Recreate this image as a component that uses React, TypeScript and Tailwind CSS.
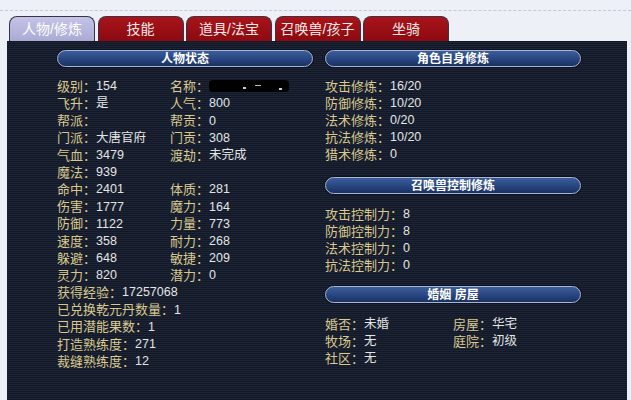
import type { ReactNode } from 'react'

const font = { fontFamily: '"Liberation Sans", "Noto Sans CJK SC", sans-serif' }

const tabs = ['人物/修炼', '技能', '道具/法宝', '召唤兽/孩子', '坐骑']

type Pair = [string, ReactNode]

const leftGrid: [Pair, Pair | null][] = [
  [['级别', '154'], ['名称', <NameBlur key="n" />]],
  [['飞升', '是'], ['人气', '800']],
  [['帮派', ''], ['帮贡', '0']],
  [['门派', '大唐官府'], ['门贡', '308']],
  [['气血', '3479'], ['渡劫', '未完成']],
  [['魔法', '939'], null],
  [['命中', '2401'], ['体质', '281']],
  [['伤害', '1777'], ['魔力', '164']],
  [['防御', '1122'], ['力量', '773']],
  [['速度', '358'], ['耐力', '268']],
  [['躲避', '648'], ['敏捷', '209']],
  [['灵力', '820'], ['潜力', '0']],
]

const leftSingle: Pair[] = [
  ['获得经验', '17257068'],
  ['已兑换乾元丹数量', '1'],
  ['已用潜能果数', '1'],
  ['打造熟练度', '271'],
  ['裁缝熟练度', '12'],
]

const selfTrain: Pair[] = [
  ['攻击修炼', '16/20'],
  ['防御修炼', '10/20'],
  ['法术修炼', '0/20'],
  ['抗法修炼', '10/20'],
  ['猎术修炼', '0'],
]

const petTrain: Pair[] = [
  ['攻击控制力', '8'],
  ['防御控制力', '8'],
  ['法术控制力', '0'],
  ['抗法控制力', '0'],
]

const house: [Pair, Pair | null][] = [
  [['婚否', '未婚'], ['房屋', '华宅']],
  [['牧场', '无'], ['庭院', '初级']],
  [['社区', '无'], null],
]

function NameBlur() {
  return (
    <span className="relative inline-block h-[12px] w-[80px] translate-y-[2px] rounded-sm bg-black blur-[0.6px]">
      <span className="absolute left-[34px] top-[7px] h-[2px] w-[3px] bg-[#cfcfcf]" />
      <span className="absolute left-[46px] top-[5px] h-[1px] w-[6px] bg-[#bdbdbd]" />
      <span className="absolute left-[70px] top-[8px] h-[2px] w-[3px] bg-[#cfcfcf]" />
    </span>
  )
}

function Field({ label, value, tall }: { label: string; value: ReactNode; tall?: boolean }) {
  return (
    <div className={`flex items-center whitespace-nowrap ${tall ? 'h-[17.2px]' : 'h-[17px]'}`}>
      <span className="text-[13px] text-[#d9c98e]">{label}：</span>
      <span className="text-[12.5px] text-[#e4e4e4]">{value}</span>
    </div>
  )
}

function Pill({ children }: { children: ReactNode }) {
  return (
    <div className="flex h-[17px] w-[256px] items-center justify-center rounded-full border border-[#a9b6d2] bg-gradient-to-b from-[#3d5d9a] via-[#284783] to-[#1b3163] text-[12px] font-bold text-white shadow-[0_0_0_1px_#0c1220]">
      {children}
    </div>
  )
}

export default function App() {
  return (
    <div className="relative h-[400px] w-[631px] overflow-hidden bg-[#eef0f7]" style={font}>
      <div className="h-[11px] border-b border-dashed border-[#c4c8d4]" />

      <div className="flex gap-[2.5px] pl-[9px] pt-[5px]">
        {tabs.map((tab, i) => (
          <div
            className={`flex h-[25px] w-[86px] items-center justify-center rounded-t-[8px] border border-b-0 border-[#3b3344] text-[14px] ${
              i === 0
                ? 'bg-gradient-to-b from-[#c4c4e8] to-[#aaaad6] text-white'
                : 'bg-gradient-to-b from-[#a8141a] to-[#8c0a10] text-[#f4e8e8]'
            }`}
            key={tab}
          >
            {tab}
          </div>
        ))}
      </div>

      <div className="ml-[7px] h-[360px] w-[620px] bg-[repeating-linear-gradient(0deg,#1c2435_0px,#1c2435_1px,#121826_1px,#121826_2px)] pl-[50px] pt-[9px]">
        <div className="grid grid-cols-[256px_256px] gap-x-[12px]">
          <div>
            <Pill>人物状态</Pill>
            <div className="mt-[11px]">
              {leftGrid.map(([a, b]) => (
                <div className="grid grid-cols-[113px_1fr]" key={a[0]}>
                  <Field label={a[0]} tall value={a[1]} />
                  {b ? <Field label={b[0]} tall value={b[1]} /> : <div />}
                </div>
              ))}
              {leftSingle.map(([label, value]) => (
                <Field key={label} label={label} tall value={value} />
              ))}
            </div>
          </div>

          <div>
            <Pill>角色自身修炼</Pill>
            <div className="mt-[11px]">
              {selfTrain.map(([label, value]) => (
                <Field key={label} label={label} value={value} />
              ))}
            </div>

            <div className="mt-[14px]">
              <Pill>召唤兽控制修炼</Pill>
            </div>
            <div className="mt-[12px]">
              {petTrain.map(([label, value]) => (
                <Field key={label} label={label} value={value} />
              ))}
            </div>

            <div className="mt-[12px]">
              <Pill>婚姻 房屋</Pill>
            </div>
            <div className="mt-[13px]">
              {house.map(([a, b]) => (
                <div className="grid grid-cols-[128px_1fr]" key={a[0]}>
                  <Field label={a[0]} value={a[1]} />
                  {b ? <Field label={b[0]} value={b[1]} /> : <div />}
                </div>
              ))}
            </div>
          </div>
        </div>
      </div>
    </div>
  )
}
